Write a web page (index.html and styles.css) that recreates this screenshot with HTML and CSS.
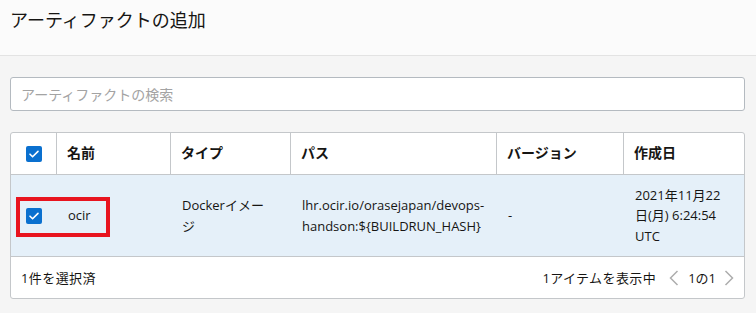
FILE: index.html
```html
<!DOCTYPE html>
<html lang="ja">
<head>
<meta charset="utf-8">
<title>アーティファクトの追加</title>
<link rel="stylesheet" href="styles.css">
</head>
<body>
<header class="panel-header">
  <h1 class="panel-title">アーティファクトの追加</h1>
</header>
<main class="panel-body">
  <input class="search" type="text" placeholder="アーティファクトの検索">
  <div class="table">
    <div class="row head">
      <div class="cell cb-cell"><span class="checkbox"><svg viewBox="0 0 16 16" width="16" height="16"><path d="M4 8.2l2.6 2.6L12 5.4" fill="none" stroke="#fff" stroke-width="1.6" stroke-linecap="round" stroke-linejoin="round"/></svg></span></div>
      <div class="cell">名前</div>
      <div class="cell">タイプ</div>
      <div class="cell">パス</div>
      <div class="cell">バージョン</div>
      <div class="cell last">作成日</div>
    </div>
    <div class="row body selected">
      <div class="cell cb-cell"><span class="checkbox"><svg viewBox="0 0 16 16" width="16" height="16"><path d="M4 8.2l2.6 2.6L12 5.4" fill="none" stroke="#fff" stroke-width="1.6" stroke-linecap="round" stroke-linejoin="round"/></svg></span></div>
      <div class="cell">ocir</div>
      <div class="cell">Dockerイメー<br>ジ</div>
      <div class="cell">lhr.ocir.io/orasejapan/devops-<br>handson:${BUILDRUN_HASH}</div>
      <div class="cell">-</div>
      <div class="cell last">2021年11月22<br>日(月) 6:24:54<br>UTC</div>
      <div class="highlight"></div>
    </div>
    <div class="footer">
      <span class="selected-count">1件を選択済</span>
      <div class="pager">
        <span class="pager-info">1アイテムを表示中</span>
        <svg class="chev" viewBox="0 0 10 16" width="10" height="16"><path d="M8.5 1L1.5 8l7 7" fill="none" stroke="#adadad" stroke-width="1.5"/></svg>
        <span class="pager-pages">1の1</span>
        <svg class="chev" viewBox="0 0 10 16" width="10" height="16"><path d="M1.5 1l7 7-7 7" fill="none" stroke="#adadad" stroke-width="1.5"/></svg>
      </div>
    </div>
  </div>
</main>
</body>
</html>
```
FILE: styles.css
```css
html, body {
  margin: 0;
  padding: 0;
}
body {
  background: #f5f5f5;
  font-family: "Open Sans", "Noto Sans CJK JP", sans-serif;
  font-size: 13px;
  color: #1f1f1f;
  width: 756px;
  height: 313px;
  overflow: hidden;
}
.panel-header {
  height: 56px;
  background: #fbfbfb;
  border-bottom: 1px solid #e3e3e3;
  box-sizing: border-box;
  padding: 7px 10px 0;
}
.panel-title {
  margin: 0;
  font-size: 18px;
  font-weight: 400;
  line-height: 26px;
  color: #161513;
}
.panel-body {
  padding: 21px 11px 0 10px;
  display: flex;
  flex-direction: column;
  gap: 21px;
}
.search {
  display: block;
  box-sizing: border-box;
  height: 34px;
  width: 100%;
  margin: 0;
  border: 1px solid #b4bac0;
  border-radius: 3px;
  background: #fff;
  padding: 0 10px;
  font-family: inherit;
  font-size: 14px;
  color: #1f1f1f;
  outline: none;
}
.search::placeholder {
  color: #a3a3a3;
}
.table {
  border: 1px solid #c4c7ca;
  border-radius: 3px;
  background: #fff;
  overflow: hidden;
}
.row {
  display: grid;
  grid-template-columns: 46px 114px 120px 206px 127px 1fr;
  position: relative;
}
.row.head {
  height: 41px;
  border-bottom: 1px solid #c4c7ca;
  font-weight: 700;
  font-size: 14px;
  color: #161513;
}
.row.head .cell {
  border-right: 1px solid #c4c7ca;
}
.row.head .cell.last {
  border-right: none;
}
.cell {
  display: flex;
  align-items: center;
  padding: 0 10px 0 11px;
  line-height: 20.5px;
}
.row.head .cell {
  padding-left: 10px;
}
.row.head .cell.cb-cell,
.cell.cb-cell {
  padding: 0 0 0 15px;
}
.row.body {
  height: 81px;
  border-bottom: 1px solid #c4c7ca;
  color: #161513;
}
.row.selected {
  background: #e5f0f9;
}
.row.body .cell {
  display: block;
  align-self: center;
}
.row.body .cell.cb-cell {
  display: flex;
}
.checkbox {
  display: inline-flex;
  width: 16px;
  height: 16px;
  border-radius: 2px;
  background: #0a70cf;
}
.highlight {
  position: absolute;
  left: 5px;
  top: 22px;
  width: 94px;
  height: 40px;
  box-sizing: border-box;
  border: 4px solid #e8141f;
}
.footer {
  height: 41px;
  display: flex;
  align-items: center;
  justify-content: space-between;
  padding: 0 10px 0 10px;
  color: #161513;
}
.selected-count {
  letter-spacing: 0.4px;
}
.pager {
  display: flex;
  align-items: center;
}
.pager-info {
  margin-right: 13px;
  letter-spacing: 0.4px;
}
.pager-pages {
  margin: 0 8px 0 9px;
}
.chev {
  display: block;
}
```
